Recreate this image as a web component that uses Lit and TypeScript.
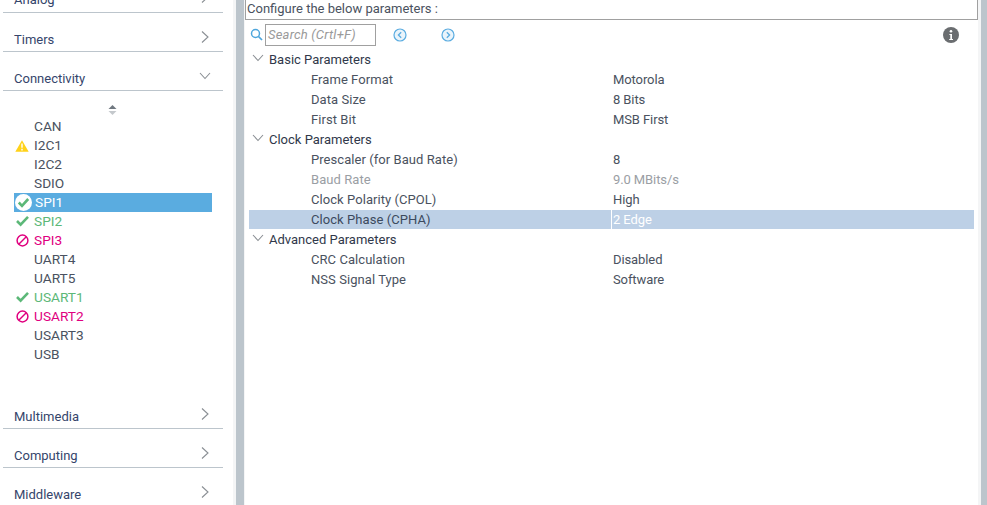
import { LitElement, html, css, svg } from "lit";
import { customElement } from "lit/decorators.js";

type Status = "" | "warn" | "ok" | "no";
const periph: [string, Status][] = [
  ["CAN", ""], ["I2C1", "warn"], ["I2C2", ""], ["SDIO", ""], ["SPI1", "ok"], ["SPI2", "ok"], ["SPI3", "no"],
  ["UART4", ""], ["UART5", ""], ["USART1", "ok"], ["USART2", "no"], ["USART3", ""], ["USB", ""],
];
type Row = { h?: string; l?: string; v?: string; dim?: boolean; sel?: boolean };
const rows: Row[] = [
  { h: "Basic Parameters" },
  { l: "Frame Format", v: "Motorola" },
  { l: "Data Size", v: "8 Bits" },
  { l: "First Bit", v: "MSB First" },
  { h: "Clock Parameters" },
  { l: "Prescaler (for Baud Rate)", v: "8" },
  { l: "Baud Rate", v: "9.0 MBits/s", dim: true },
  { l: "Clock Polarity (CPOL)", v: "High" },
  { l: "Clock Phase (CPHA)", v: "2 Edge", sel: true },
  { h: "Advanced Parameters" },
  { l: "CRC Calculation", v: "Disabled" },
  { l: "NSS Signal Type", v: "Software" },
];
const chevR = svg`<svg class="chev" width="10" height="14" viewBox="0 0 10 14"><path d="M2 1.5 8 7 2 12.5" fill="none" stroke="#8a8f94" stroke-width="1.1"/></svg>`;
const chevD = svg`<svg class="chev" width="14" height="10" viewBox="0 0 14 10"><path d="M2 2 7 7.5 12 2" fill="none" stroke="#8a8f94" stroke-width="1.1"/></svg>`;

@customElement("app-root")
export class AppRoot extends LitElement {
  static styles = css`
    :host { display: flex; width: 987px; height: 505px; overflow: hidden; background: #fff; font-family: Roboto, "Liberation Sans", sans-serif; font-size: 13px; color: #3c4a5e; }
    .side { width: 233px; flex: none; height: 505px; overflow: hidden; padding-left: 3px; box-sizing: border-box; background: #fff; }
    .cat { width: 220px; height: 39px; box-sizing: border-box; border-bottom: 1px solid #bcc5cc; display: flex; align-items: flex-end; justify-content: space-between; padding: 0 13px 2px 11px; color: #35456b; line-height: 18px; flex: none; }
    .cat.first { height: 13px; }
    .cat.first span { margin-bottom: 1px; }
    .cat.short { height: 31px; }
    .cat .chev { margin-bottom: 5px; }
    .cat.first .chev { margin-bottom: 6px; }
    .cat.open .chev { margin-right: -2px; margin-bottom: 7px; }
    .sorter { width: 220px; height: 38px; padding-right: 2px; box-sizing: border-box; display: flex; justify-content: center; align-items: center; }
    .list { margin-top: -12px; margin-bottom: 34px; }
    .item { height: 19px; line-height: 19px; font-size: 13.7px; display: flex; align-items: center; width: 198px; margin-left: 11px; position: relative; padding-left: 20px; box-sizing: border-box; color: #4a5260; }
    .item svg { position: absolute; left: 2px; top: 3px; }
    .item.warn svg { left: 1px; top: 4px; }
    .item.ok { color: #5cb878; }
    .item.no { color: #e0007f; }
    .item.sel { background: #5aace0; color: #fff; padding-left: 21px; }
    .item.sel svg { left: 0; top: 0; }
    .bar { width: 3px; background: #f4f5f6; flex: none; }
    .bar2 { width: 8px; background: #bcc5cc; flex: none; }
    .bar3 { width: 1px; background: #f4f5f6; flex: none; }
    .main { flex: 1; min-width: 0; display: flex; flex-direction: column; }
    .title { height: 20px; box-sizing: border-box; border: 1px solid #a0a0a0; border-top: 0; line-height: 18px; padding-left: 1px; color: #4a5260; }
    .tools { height: 29px; display: flex; align-items: center; padding-left: 5px; }
    .search { width: 111px; height: 22px; box-sizing: border-box; border: 1px solid #a0a0a0; margin-left: 2px; color: #9a9a9a; font-style: italic; line-height: 20px; padding-left: 2px; letter-spacing: 0.2px; white-space: nowrap; overflow: hidden; }
    .nav1 { margin-left: 17px; }
    .nav2 { margin-left: 34px; }
    .info { margin-left: auto; margin-right: 19px; margin-top: 1px; }
    .rows { padding: 1px 4px 0; }
    .row { height: 20px; line-height: 19px; display: flex; color: #4a5260; box-sizing: border-box; }
    .row.h { color: #30384a; align-items: flex-start; padding-left: 2px; }
    .row.h svg { margin-right: 4px; width: 14px; margin-top: 3px; }
    .l { width: 362px; padding-left: 62px; box-sizing: border-box; flex: none; letter-spacing: 0.06px; }
    .v { flex: 1; padding-left: 2px; letter-spacing: -0.1px; }
    .row.dim { color: #9a9ea4; }
    .row.sel { background: #bdd0e6; color: #fff; height: 19px; margin-bottom: 1px; }
    .row.sel .l { color: #3c4a5e; border-right: 1px solid #fff; width: 363px; }
    .row.sel .v { padding-left: 1px; }
    .right { width: 3px; background: #f4f5f6; flex: none; }
    .right2 { width: 6px; background: #bcc5cc; flex: none; }
  `;

  icon(s: Status, sel: boolean) {
    if (s === "warn") return svg`<svg width="14" height="12" viewBox="0 0 14 12"><path d="M7 .2 13.7 11.8H.3Z" fill="#ffd21a"/><path d="M7 3.5v4.3M7 8.8v1.6" stroke="#fff" stroke-width="1.4"/></svg>`;
    if (s === "ok" && sel) return svg`<svg width="18" height="19" viewBox="0 0 18 19"><circle cx="9.5" cy="9.5" r="8.5" fill="#fff"/><path d="M4.8 9.5 8 12.8 14.2 6" fill="none" stroke="#5cb878" stroke-width="2.6"/></svg>`;
    if (s === "ok") return svg`<svg width="13" height="12" viewBox="0 0 13 12"><path d="M1 6 4.6 9.6 12 1.8" fill="none" stroke="#5cb878" stroke-width="2.6"/></svg>`;
    if (s === "no") return svg`<svg width="13" height="13" viewBox="0 0 13 13"><circle cx="6.5" cy="6.5" r="5.4" fill="none" stroke="#e0007f" stroke-width="1.5"/><path d="M3 10 10 3" stroke="#e0007f" stroke-width="1.5"/></svg>`;
    return "";
  }

  render() {
    return html`
      <div class="side">
        <div class="cat first"><span>Analog</span>${chevR}</div>
        <div class="cat">Timers ${chevR}</div>
        <div class="cat open">Connectivity ${chevD}</div>
        <div class="sorter"><svg width="9" height="12" viewBox="0 0 9 12"><path d="M4.5 1 8.5 5H.5Z" fill="#707880"/><path d="M4.5 11 .5 7H8.5Z" fill="#c4c8cc"/></svg></div>
        <div class="list">
          ${periph.map(([n, s]) => {
            const sel = n === "SPI1";
            return html`<div class="item ${s} ${sel ? "sel" : ""}">${this.icon(s, sel)}${n}</div>`;
          })}
        </div>
        <div class="cat short">Multimedia ${chevR}</div>
        <div class="cat">Computing ${chevR}</div>
        <div class="cat">Middleware ${chevR}</div>
      </div>
      <div class="bar"></div>
      <div class="bar2"></div>
      <div class="bar3"></div>
      <div class="main">
        <div class="title">Configure the below parameters :</div>
        <div class="tools">
          <svg width="13" height="13" viewBox="0 0 13 13"><circle cx="5.5" cy="5.5" r="4" fill="none" stroke="#4ea6dc" stroke-width="1.5"/><path d="M8.5 8.5 12 12" stroke="#4ea6dc" stroke-width="1.7"/></svg>
          <div class="search">Search (Crtl+F)</div>
          <svg class="nav1" width="14" height="14" viewBox="0 0 14 14"><circle cx="7" cy="7" r="6" fill="#eaf4fb" stroke="#5aace0" stroke-width="1.2"/><path d="M8.2 4.2 5.4 7 8.2 9.8" fill="none" stroke="#5aace0" stroke-width="1.3"/></svg>
          <svg class="nav2" width="14" height="14" viewBox="0 0 14 14"><circle cx="7" cy="7" r="6" fill="#eaf4fb" stroke="#5aace0" stroke-width="1.2"/><path d="M5.8 4.2 8.6 7 5.8 9.8" fill="none" stroke="#5aace0" stroke-width="1.3"/></svg>
          <svg class="info" width="16" height="16" viewBox="0 0 16 16"><circle cx="8" cy="8" r="8" fill="#6a6d70"/><circle cx="8" cy="4.2" r="1.3" fill="#fff"/><path d="M6.4 7h2.6v5h1v1.1H6.2V12h1.1V8.1H6.4Z" fill="#fff"/></svg>
        </div>
        <div class="rows">
          ${rows.map(r => r.h
            ? html`<div class="row h">${chevD}<span>${r.h}</span></div>`
            : html`<div class="row ${r.dim ? "dim" : ""} ${r.sel ? "sel" : ""}"><div class="l">${r.l}</div><div class="v">${r.v}</div></div>`)}
        </div>
      </div>
      <div class="right"></div>
      <div class="right2"></div>
    `;
  }
}
